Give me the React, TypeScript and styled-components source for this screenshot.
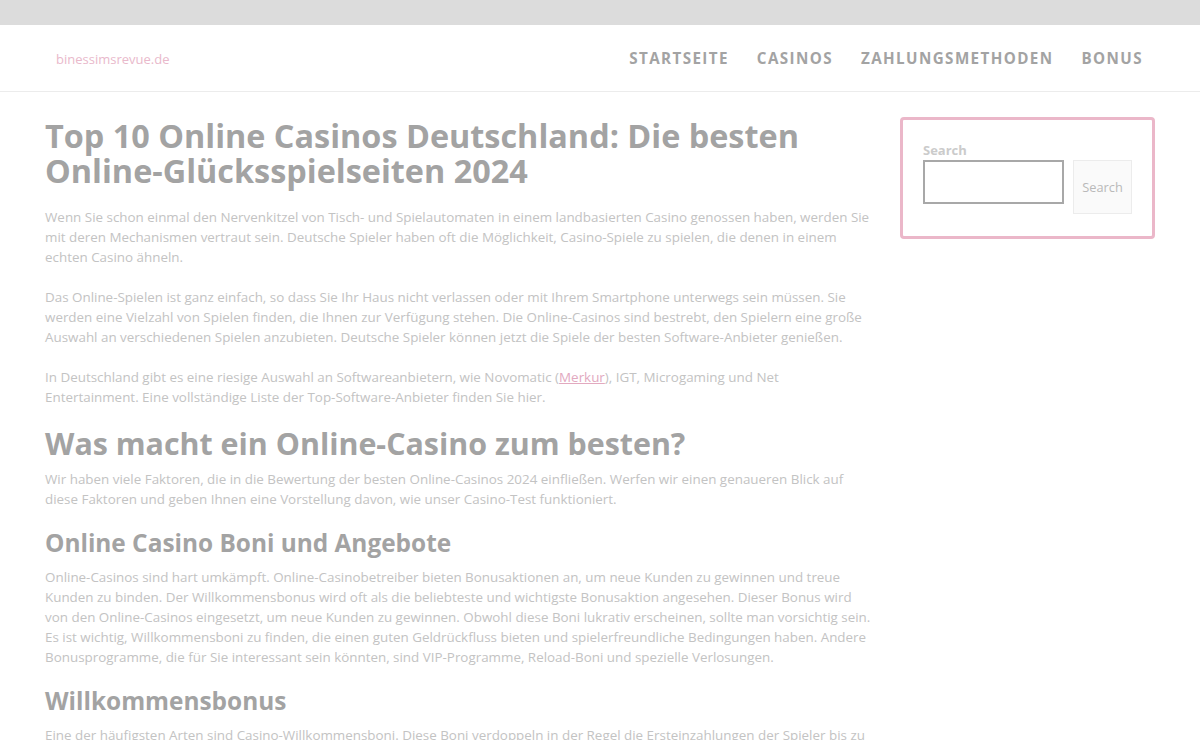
import React from "react";
import styled, { createGlobalStyle } from "styled-components";

const Global = createGlobalStyle`
  html, body { margin: 0; padding: 0; background: #fff; }
  body { font-family: "Open Sans", "Noto Sans", sans-serif; }
  * { box-sizing: border-box; }
`;

const TopBar = styled.div`
  height: 25px;
  background: #dcdcdc;
`;

const Header = styled.header`
  height: 67px;
  display: flex;
  align-items: center;
  justify-content: space-between;
  padding: 0 57px 0 56px;
  border-bottom: 1px solid #ececec;
`;

const Logo = styled.a`
  font-size: 13px;
  color: #e9b9cb;
  text-decoration: none;
  margin-top: 2px;
`;

const Nav = styled.nav`
  display: flex;
  gap: 28px;
`;

const NavLink = styled.a`
  font-size: 15.2px;
  font-weight: 700;
  letter-spacing: 1.4px;
  color: #a3a3a3;
  text-decoration: none;
`;

const Layout = styled.div`
  display: grid;
  grid-template-columns: 829px 255px;
  column-gap: 26px;
  padding: 26px 45px 0 45px;
`;

const Article = styled.main``;

const H1 = styled.h1`
  font-size: 32.4px;
  line-height: 35px;
  font-weight: 700;
  color: #a3a3a3;
  margin: 0 0 19px;
`;

const H2 = styled.h2`
  font-size: 30.4px;
  line-height: 36px;
  font-weight: 700;
  color: #a3a3a3;
  margin: 19px 0 7px;
`;

const H3 = styled.h3`
  font-size: 24.4px;
  line-height: 30px;
  font-weight: 700;
  color: #a3a3a3;
  margin: 19px 0 9px;
`;

const P = styled.p`
  font-size: 13.4px;
  line-height: 20px;
  color: #c3c3c3;
  margin: 0 0 20px;
`;

const PTight = styled(P)`
  margin-bottom: 0;
`;

const Link = styled.a`
  color: #e2a9bf;
  text-decoration: underline;
`;

const Sidebar = styled.aside``;

const SearchBox = styled.form`
  border: 3px solid #ebb7c9;
  border-radius: 4px;
  padding: 23px 20px 22px 20px;
  margin-top: -1px;
`;

const Label = styled.label`
  display: block;
  font-size: 13px;
  font-weight: 700;
  color: #cbcbcb;
  line-height: 14px;
  margin-bottom: 3px;
`;

const Row = styled.div`
  display: flex;
  gap: 9px;
  align-items: flex-start;
`;

const Input = styled.input`
  width: 141px;
  height: 44px;
  border: 2px solid #a8a8a8;
  background: #fff;
  outline: none;
`;

const Button = styled.button`
  width: 60px;
  height: 54px;
  background: #fafafa;
  border: 1px solid #ececec;
  color: #b9b9b9;
  font-family: "Open Sans", sans-serif;
  font-size: 12.8px;
  padding: 0;
`;

export default function App() {
  return (
    <>
      <Global />
      <TopBar />
      <Header>
        <Logo href="#">binessimsrevue.de</Logo>
        <Nav>
          <NavLink href="#">STARTSEITE</NavLink>
          <NavLink href="#">CASINOS</NavLink>
          <NavLink href="#">ZAHLUNGSMETHODEN</NavLink>
          <NavLink href="#">BONUS</NavLink>
        </Nav>
      </Header>
      <Layout>
        <Article>
          <H1>Top 10 Online Casinos Deutschland: Die besten Online-Glücksspielseiten 2024</H1>
          <P>
            Wenn Sie schon einmal den Nervenkitzel von Tisch- und Spielautomaten in einem landbasierten Casino genossen haben, werden Sie mit deren Mechanismen vertraut sein. Deutsche Spieler haben oft die Möglichkeit, Casino-Spiele zu spielen, die denen in einem echten Casino ähneln.
          </P>
          <P>
            Das Online-Spielen ist ganz einfach, so dass Sie Ihr Haus nicht verlassen oder mit Ihrem Smartphone unterwegs sein müssen. Sie werden eine Vielzahl von Spielen finden, die Ihnen zur Verfügung stehen. Die Online-Casinos sind bestrebt, den Spielern eine große Auswahl an verschiedenen Spielen anzubieten. Deutsche Spieler können jetzt die Spiele der besten Software-Anbieter genießen.
          </P>
          <PTight>
            In Deutschland gibt es eine riesige Auswahl an Softwareanbietern, wie Novomatic (<Link href="#">Merkur</Link>), IGT, Microgaming und Net Entertainment. Eine vollständige Liste der Top-Software-Anbieter finden Sie hier.
          </PTight>
          <H2>Was macht ein Online-Casino zum besten?</H2>
          <PTight>
            Wir haben viele Faktoren, die in die Bewertung der besten Online-Casinos 2024 einfließen. Werfen wir einen genaueren Blick auf diese Faktoren und geben Ihnen eine Vorstellung davon, wie unser Casino-Test funktioniert.
          </PTight>
          <H3>Online Casino Boni und Angebote</H3>
          <PTight>
            Online-Casinos sind hart umkämpft. Online-Casinobetreiber bieten Bonusaktionen an, um neue Kunden zu gewinnen und treue Kunden zu binden. Der Willkommensbonus wird oft als die beliebteste und wichtigste Bonusaktion angesehen. Dieser Bonus wird von den Online-Casinos eingesetzt, um neue Kunden zu gewinnen. Obwohl diese Boni lukrativ erscheinen, sollte man vorsichtig sein. Es ist wichtig, Willkommensboni zu finden, die einen guten Geldrückfluss bieten und spielerfreundliche Bedingungen haben. Andere Bonusprogramme, die für Sie interessant sein könnten, sind VIP-Programme, Reload-Boni und spezielle Verlosungen.
          </PTight>
          <H3>Willkommensbonus</H3>
          <PTight>
            Eine der häufigsten Arten sind Casino-Willkommensboni. Diese Boni verdoppeln in der Regel die Ersteinzahlungen der Spieler bis zu einem bestimmten Betrag.
          </PTight>
        </Article>
        <Sidebar>
          <SearchBox onSubmit={(e) => e.preventDefault()}>
            <Label htmlFor="s">Search</Label>
            <Row>
              <Input id="s" type="text" />
              <Button type="submit">Search</Button>
            </Row>
          </SearchBox>
        </Sidebar>
      </Layout>
    </>
  );
}
